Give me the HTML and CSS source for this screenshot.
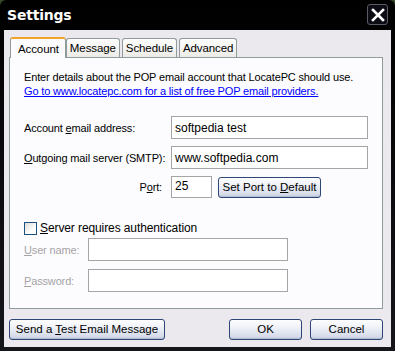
FILE: index.html
```html
<!DOCTYPE html>
<html lang="en">
<head>
    <meta charset="UTF-8">
    <title>Settings</title>
    <link rel="stylesheet" href="styles.css">
</head>
<body>
    <div class="window">
        <div class="titlebar">
            <span class="title">Settings</span>
            <span class="close-btn">
                <svg width="14" height="14" viewBox="0 0 14 14"><path d="M2 2 L12 12 M12 2 L2 12" stroke="#fff" stroke-width="2.6" stroke-linecap="square"/></svg>
            </span>
        </div>
        <div class="client">
            <div class="tabs">
                <div class="tab active">Account</div>
                <div class="tab">Message</div>
                <div class="tab">Schedule</div>
                <div class="tab">Advanced</div>
            </div>
            <div class="panel">
                <p class="intro">Enter details about the POP email account that LocatePC should use.</p>
                <a class="link" href="#">Go to www.locatepc.com for a list of free POP email providers.</a>

                <div class="row row-first">
                    <label class="label">Account <u>e</u>mail address:</label>
                    <div class="input wide">softpedia test</div>
                </div>
                <div class="row">
                    <label class="label"><u>O</u>utgoing mail server (SMTP):</label>
                    <div class="input wide">www.softpedia.com</div>
                </div>
                <div class="row">
                    <label class="label label-right">P<u>o</u>rt:</label>
                    <div class="input port">25</div>
                    <button class="btn btn-port">Set Port to <u>D</u>efault</button>
                </div>

                <div class="check-row">
                    <span class="checkbox"></span>
                    <span><u>S</u>erver requires authentication</span>
                </div>
                <div class="row auth">
                    <label class="label disabled"><u>U</u>ser name:</label>
                    <div class="input auth-input"></div>
                </div>
                <div class="row auth">
                    <label class="label disabled"><u>P</u>assword:</label>
                    <div class="input auth-input"></div>
                </div>
            </div>
            <div class="footer">
                <button class="btn btn-test">Send a <u>T</u>est Email Message</button>
                <div class="footer-right">
                    <button class="btn btn-ok">OK</button>
                    <button class="btn btn-cancel">Cancel</button>
                </div>
            </div>
        </div>
    </div>
</body>
</html>
```

FILE: styles.css
```css
* {
    margin: 0;
    padding: 0;
    box-sizing: border-box;
}

body {
    font-family: "Liberation Sans", Arial, sans-serif;
    font-size: 11px;
    color: #000;
    background: #3a4a2a;
    white-space: nowrap;
}

u {
    text-decoration: underline;
}

.window {
    width: 395px;
    height: 351px;
    background: linear-gradient(#000 0%, #15151c 100%);
    border-radius: 6px 6px 0 0;
    padding: 0 4px 4px 4px;
    display: flex;
    flex-direction: column;
}

.titlebar {
    height: 30px;
    display: flex;
    align-items: center;
    justify-content: space-between;
    padding: 0 3px 0 3px;
}

.title {
    color: #fff;
    font-family: "DejaVu Sans", sans-serif;
    font-weight: bold;
    font-size: 14px;
    letter-spacing: -0.2px;
}

.close-btn {
    width: 21px;
    height: 21px;
    border: 1px solid #5a5a68;
    border-radius: 3px;
    background: #0c0c14;
    display: flex;
    align-items: center;
    justify-content: center;
    margin-top: -1px;
}

.client {
    flex: 1;
    background: #ebe9ed;
    padding: 6px 4px 0 5px;
    display: flex;
    flex-direction: column;
}

.tabs {
    display: flex;
    align-items: flex-end;
    height: 21px;
    padding-left: 1px;
    font-size: 11.5px;
    letter-spacing: -0.1px;
}

.tab {
    height: 19px;
    padding: 0 3px;
    border: 1px solid #919b9c;
    border-bottom: none;
    border-radius: 3px 3px 0 0;
    background: linear-gradient(#fefefe, #ecebe6);
    display: flex;
    align-items: center;
    margin-left: 2px;
}

.tab.active {
    height: 21px;
    background: #fcfcfe;
    border-top: 2px solid #f0a42c;
    padding: 0 6px 0 7px;
    position: relative;
    z-index: 1;
    margin-bottom: -1px;
    margin-left: 0;
}

.tab.active + .tab {
    margin-left: 0;
}

.panel {
    width: 374px;
    height: 252px;
    background: #fcfcfe;
    border: 1px solid #919b9c;
    padding: 12px 14px 0 14px;
    letter-spacing: -0.15px;
}

.intro {
    line-height: 14px;
}

.link {
    display: block;
    color: #0000ff;
    line-height: 14px;
}

.row {
    display: flex;
    align-items: center;
    margin-top: 7px;
}

.row-first {
    margin-top: 18px;
}

.label {
    width: 147px;
    flex-shrink: 0;
}

.label-right {
    text-align: right;
    padding-right: 9px;
}

.label.disabled {
    width: 64px;
    color: #a6a3a6;
}

.input {
    height: 23px;
    border: 1px solid #a5a5a5;
    background: #fff;
    padding: 0 3px;
    display: flex;
    align-items: center;
    font-size: 12px;
    letter-spacing: 0;
}

.wide {
    width: 200px;
}

.port {
    width: 41px;
    height: 22px;
    align-items: flex-start;
    padding-top: 2px;
}

.auth-input {
    width: 200px;
    height: 23px;
}

.row.auth {
    margin-top: 3px;
}

.row.auth + .row.auth {
    margin-top: 8px;
}

.btn {
    font-family: "Liberation Sans", Arial, sans-serif;
    font-size: 11.5px;
    letter-spacing: 0;
    white-space: nowrap;
    color: #000;
    height: 21px;
    line-height: 19px;
    border: 1px solid #2d4676;
    border-radius: 3px;
    background: linear-gradient(#fdfdfe 0%, #eef1f7 40%, #d6dcea 85%, #c2cadb 100%);
    box-shadow: inset 0 -1px 0 #b5bfd3;
    display: inline-block;
    text-align: center;
}

.btn-port {
    width: 103px;
    margin-left: 6px;
}

.check-row {
    display: flex;
    align-items: center;
    gap: 3px;
    margin-top: 23px;
    font-size: 12px;
    letter-spacing: -0.1px;
}

.checkbox {
    width: 13px;
    height: 13px;
    border: 1px solid #1c5180;
    background: linear-gradient(135deg, #dcdcd7 0%, #fbfbfa 60%, #fff 100%);
}

.footer {
    display: flex;
    justify-content: space-between;
    margin-top: 10px;
    padding-right: 4px;
}

.footer-right {
    display: flex;
    gap: 8px;
}

.btn-test {
    width: 156px;
}

.btn-ok,
.btn-cancel {
    width: 73px;
}
```
